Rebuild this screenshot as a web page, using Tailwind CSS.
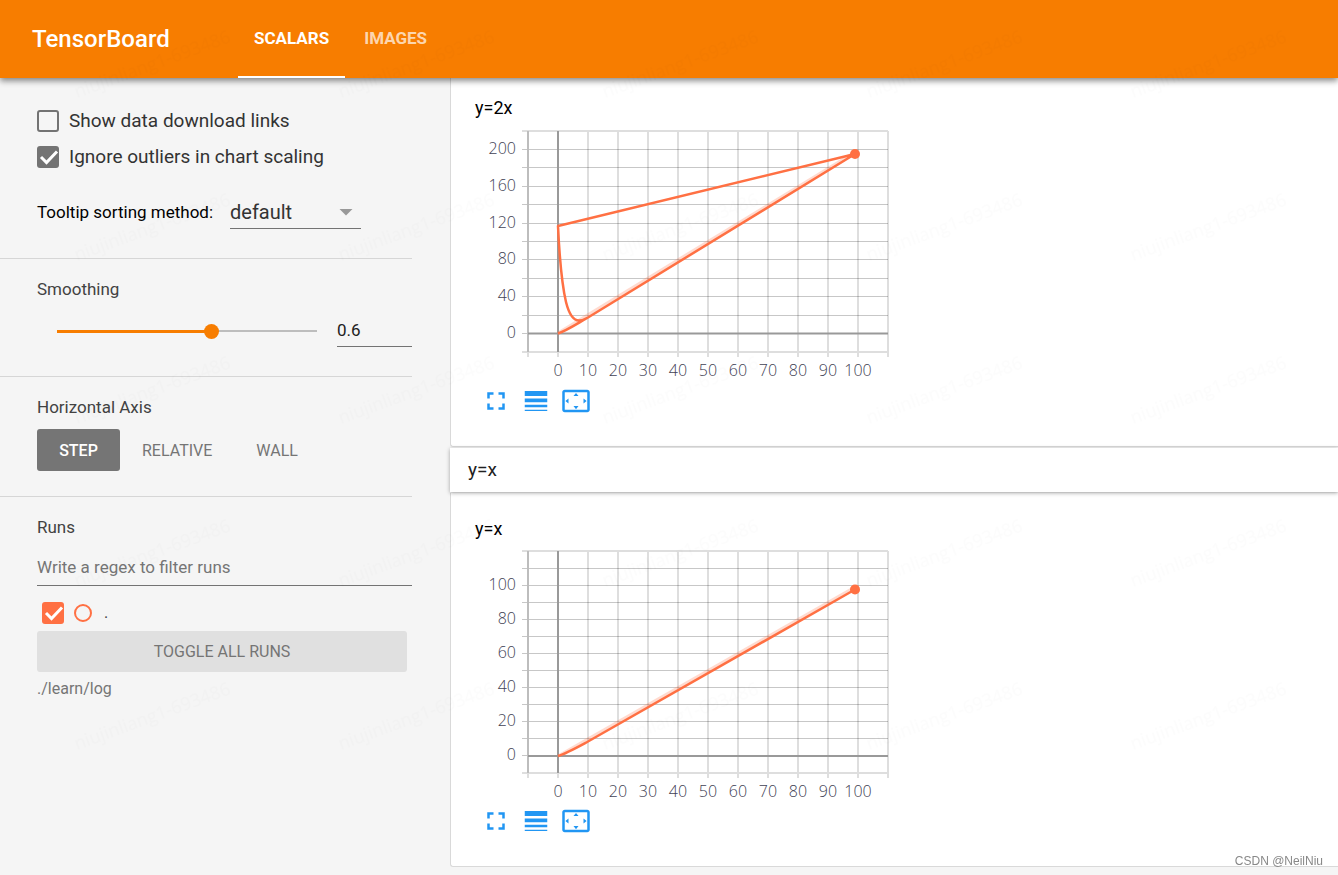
<!DOCTYPE html>
<html lang="en">
<head>
<meta charset="utf-8">
<title>TensorBoard</title>
<script src="https://cdn.jsdelivr.net/npm/@tailwindcss/browser@4"></script>
</head>
<body class="flex min-h-screen flex-col bg-[#f5f5f5] font-[Roboto,sans-serif] text-[#212121]">

<!-- Icons shared by both chart toolbars -->
<svg class="hidden" aria-hidden="true">
  <symbol id="fullscreen" viewBox="0 0 24 24"><path d="M7 14H5v5h5v-2H7v-3zm-2-4h2V7h3V5H5v5zm12 7h-3v2h5v-5h-2v3zM14 5v2h3v3h2V5h-5z"/></symbol>
  <symbol id="line-weight" viewBox="0 0 24 24"><path d="M3 17h18v-2H3v2zm0 3h18v-1H3v1zm0-7h18v-3H3v3zm0-9v4h18V4H3z"/></symbol>
  <symbol id="overscan" viewBox="0 0 24 24"><path d="M12.01 5.5L10 8h4l-1.99-2.5zM18 10v4l2.5-1.99L18 10zM6 10l-2.5 2.01L6 14v-4zm8 6h-4l2.01 2.5L14 16zm7-13H3c-1.1 0-2 .9-2 2v14c0 1.1.9 2 2 2h18c1.1 0 2-.9 2-2V5c0-1.1-.9-2-2-2zm0 16.01H3V4.99h18v14.02z"/></symbol>
</svg>

<header class="z-10 flex h-[78px] shrink-0 items-stretch bg-[#f77d00] pl-8 shadow-[0_3px_6px_rgba(0,0,0,0.45)]">
  <h1 class="flex w-[206px] items-center text-2xl font-medium text-white">TensorBoard</h1>
  <nav class="flex gap-[3px] text-[17px] font-bold">
    <a href="#scalars" aria-current="page" class="flex items-center border-b-2 border-white px-4 pt-0.5 text-white">SCALARS</a>
    <a href="#images" class="flex items-center border-b-2 border-transparent px-4 pt-0.5 text-white/70">IMAGES</a>
  </nav>
</header>

<div class="flex flex-1">
  <aside class="w-[450px] shrink-0 pr-[38px]">
    <section class="border-b border-[#d6d6d6] pt-[25px] pb-[29px] pl-[37px]">
      <label class="flex h-9 items-center gap-2.5 text-[19px] text-[#333]">
        <input type="checkbox" class="size-[22px] appearance-none rounded-[3px] border-2 border-[#737373]">
        Show data download links
      </label>
      <label class="flex h-9 items-center gap-2.5 text-[19px] text-[#333]">
        <span class="relative size-[22px]">
          <input type="checkbox" checked class="block size-[22px] appearance-none rounded-[3px] bg-[#737373]">
          <svg class="pointer-events-none absolute inset-0" viewBox="0 0 22 22" fill="none" stroke="#fff" stroke-width="3"><path d="M4 11l5.500 5.500L20 5.500"/></svg>
        </span>
        Ignore outliers in chart scaling
      </label>
      <div class="mt-[21px] flex h-[33px] items-stretch gap-3">
        <label for="sort" class="flex w-[181px] items-center text-[17px] whitespace-nowrap text-black">Tooltip sorting method:</label>
        <div class="relative w-[131px]">
          <select id="sort" class="size-full appearance-none border-b border-[#737373] text-xl text-[#333]">
            <option>default</option><option>descending</option><option>ascending</option><option>nearest</option>
          </select>
          <svg class="pointer-events-none absolute top-[13px] right-2" width="14" height="7" viewBox="0 0 14 7" fill="#999"><path d="M0.500 0h13L7 6.500z"/></svg>
        </div>
      </div>
    </section>

    <section class="border-b border-[#d6d6d6] pt-[18px] pb-[29px] pl-[37px]">
      <h3 class="text-[17px]/6 text-[#424242]"><label for="smooth">Smoothing</label></h3>
      <div class="mt-3.5 flex h-8 items-center gap-5 pl-5">
        <input id="smooth" type="range" min="0" max="1" step="0.1" value="0.6" class="h-4 min-w-0 flex-1 appearance-none bg-transparent [&::-webkit-slider-runnable-track]:h-[3px] [&::-webkit-slider-runnable-track]:[background:linear-gradient(#f77d00,#f77d00)_0_0/60%_3px_no-repeat,linear-gradient(#bdbdbd,#bdbdbd)_0_0/100%_2px_no-repeat] [&::-webkit-slider-thumb]:-mt-1.5 [&::-webkit-slider-thumb]:size-[15px] [&::-webkit-slider-thumb]:appearance-none [&::-webkit-slider-thumb]:rounded-full [&::-webkit-slider-thumb]:bg-[#f77d00]">
        <input type="text" aria-label="Smoothing value" value="0.6" class="h-8 w-[75px] border-b border-[#737373] pb-0.5 text-[17px]">
      </div>
    </section>

    <section class="border-b border-[#d6d6d6] pt-[18px] pb-[25px] pl-[37px]">
      <h3 class="text-[17px]/6 text-[#424242]">Horizontal Axis</h3>
      <div class="mt-2.5 flex h-[42px] text-base text-[#757575]">
        <button class="w-[83px] rounded-[3px] bg-[#757575] pt-0.5 font-medium text-white">STEP</button>
        <button class="px-[22px] pt-0.5">RELATIVE</button>
        <button class="px-[22px] pt-0.5">WALL</button>
      </div>
    </section>

    <section class="pt-[18px] pl-[37px]">
      <h3 class="text-[17px]/6 text-[#424242]">Runs</h3>
      <input type="text" aria-label="Filter runs" placeholder="Write a regex to filter runs" class="mt-3 block h-[35px] w-full border-b border-[#737373] pb-0.5 text-[17px] placeholder:text-[#757575]">
      <label class="mt-[9px] flex h-9 items-center gap-2.5 pl-[5px] text-[#424242]">
        <span class="relative size-[22px]">
          <input type="checkbox" checked class="block size-[22px] appearance-none rounded-[3px] bg-[#ff7043]">
          <svg class="pointer-events-none absolute inset-0" viewBox="0 0 22 22" fill="none" stroke="#fff" stroke-width="3"><path d="M4 11l5.500 5.500L20 5.500"/></svg>
        </span>
        <span class="size-[18px] rounded-full border-2 border-[#ff7043]"></span>
        <span class="pl-0.5">.</span>
      </label>
      <button class="block h-[41px] w-[370px] rounded-[3px] bg-[#e0e0e0] text-base text-[#757575]">TOGGLE ALL RUNS</button>
      <p class="mt-[5px] text-base/6 text-[#757575]">./learn/log</p>
    </section>
  </aside>

  <main id="scalars" class="min-w-0 flex-1">
    <article class="rounded-bl-[3px] border-b border-l border-[#d9d9d9] bg-white pt-[18px] pb-6 pl-6">
      <h2 class="text-lg/6 text-black">y=2x</h2>
      <svg class="mt-[5px]" width="425" height="256" viewBox="475 125 425 256" role="img" aria-label="y=2x">
        <g fill="none">
          <path stroke="#000" stroke-opacity=".13" stroke-width="2" d="M588 131V357M618 131V357M648 131V357M678 131V357M708 131V357M738 131V357M768 131V357M798 131V357M828 131V357M858 131V357M888 131V357M528 352V357M558 352V357M522 131H888M522 352H888"/>
          <path stroke="#000" stroke-opacity=".22" d="M522 149.500H888M522 167.500H888M522 186.500H888M522 204.500H888M522 223.500H888M522 241.500H888M522 259.500H888M522 278.500H888M522 296.500H888M522 315.500H888M522 333.500H528"/>
          <path stroke="#bdbdbd" stroke-width="2" d="M528 131V352"/>
          <path stroke="#999" stroke-width="2" d="M558 131V352M528 333.500H888"/>
          <path stroke="#ff7043" stroke-opacity=".25" stroke-width="3" d="M558 333L855 152"/>
          <path stroke="#ff7043" stroke-width="2.500" stroke-linejoin="round" d="M558 333.500C566 331 575 325 588 317.500L855 154L558 226C559.500 258 562 285 566 302C569 314 573 320.500 579 320.500C583 320.500 588 317.500 588 317.500"/>
          <circle cx="855" cy="154" r="5" fill="#ff7043"/>
          <g fill="#424254" class="font-['Open_Sans',sans-serif] text-base font-light" text-anchor="end">
            <text x="516" y="154">200</text><text x="516" y="191">160</text><text x="516" y="228">120</text><text x="516" y="264">80</text><text x="516" y="301">40</text><text x="516" y="338">0</text>
          </g>
          <g fill="#424254" class="font-['Open_Sans',sans-serif] text-base font-light" text-anchor="middle">
            <text x="558" y="376">0</text><text x="588" y="376">10</text><text x="618" y="376">20</text><text x="648" y="376">30</text><text x="678" y="376">40</text><text x="708" y="376">50</text><text x="738" y="376">60</text><text x="768" y="376">70</text><text x="798" y="376">80</text><text x="828" y="376">90</text><text x="858" y="376">100</text>
          </g>
        </g>
      </svg>
      <div class="flex pb-px pl-px text-[#2196f3]">
        <button aria-label="Toggle full size" class="p-[5px]"><svg class="size-[30px] fill-current"><use href="#fullscreen"/></svg></button>
        <button aria-label="Toggle log scale" class="p-[5px]"><svg class="size-[30px] fill-current"><use href="#line-weight"/></svg></button>
        <button aria-label="Fit domain to data" class="p-[5px]"><svg class="size-[30px] fill-current"><use href="#overscan"/></svg></button>
      </div>
    </article>

    <h2 class="relative mt-px flex h-11 items-center bg-white pl-[18px] text-[19px] shadow-[0_1px_4px_rgba(0,0,0,0.35)]">y=x</h2>

    <article class="mt-px rounded-bl-[3px] border-b border-l border-[#d9d9d9] bg-white pt-6 pb-6 pl-6">
      <h2 class="text-lg/6 text-black">y=x</h2>
      <svg class="mt-[5px]" width="425" height="255" viewBox="475 546 425 255" role="img" aria-label="y=x">
        <g fill="none">
          <path stroke="#000" stroke-opacity=".13" stroke-width="2" d="M588 551V778M618 551V778M648 551V778M678 551V778M708 551V778M738 551V778M768 551V778M798 551V778M828 551V778M858 551V778M888 551V778M528 773V778M558 773V778M522 551H888M522 773H888"/>
          <path stroke="#000" stroke-opacity=".22" d="M522 568.500H888M522 585.500H888M522 602.500H888M522 619.500H888M522 636.500H888M522 653.500H888M522 670.500H888M522 687.500H888M522 704.500H888M522 721.500H888M522 738.500H888M522 755.500H528"/>
          <path stroke="#bdbdbd" stroke-width="2" d="M528 551V773"/>
          <path stroke="#999" stroke-width="2" d="M558 551V773M528 756H888"/>
          <path stroke="#ff7043" stroke-opacity=".25" stroke-width="3" d="M558 756L855 587"/>
          <path stroke="#ff7043" stroke-width="2.500" stroke-linejoin="round" d="M558 756C566 753.500 575 748.500 588 741.500L855 589.500"/>
          <circle cx="855" cy="589.500" r="5" fill="#ff7043"/>
          <g fill="#424254" class="font-['Open_Sans',sans-serif] text-base font-light" text-anchor="end">
            <text x="516" y="590">100</text><text x="516" y="624">80</text><text x="516" y="658">60</text><text x="516" y="692">40</text><text x="516" y="726">20</text><text x="516" y="760">0</text>
          </g>
          <g fill="#424254" class="font-['Open_Sans',sans-serif] text-base font-light" text-anchor="middle">
            <text x="558" y="797">0</text><text x="588" y="797">10</text><text x="618" y="797">20</text><text x="648" y="797">30</text><text x="678" y="797">40</text><text x="708" y="797">50</text><text x="738" y="797">60</text><text x="768" y="797">70</text><text x="798" y="797">80</text><text x="828" y="797">90</text><text x="858" y="797">100</text>
          </g>
        </g>
      </svg>
      <div class="flex pb-px pl-px text-[#2196f3]">
        <button aria-label="Toggle full size" class="p-[5px]"><svg class="size-[30px] fill-current"><use href="#fullscreen"/></svg></button>
        <button aria-label="Toggle log scale" class="p-[5px]"><svg class="size-[30px] fill-current"><use href="#line-weight"/></svg></button>
        <button aria-label="Fit domain to data" class="p-[5px]"><svg class="size-[30px] fill-current"><use href="#overscan"/></svg></button>
      </div>
    </article>
  </main>
</div>

<!-- Repeating user-id watermark over the whole window -->
<svg class="pointer-events-none fixed inset-0 z-20 size-full" aria-hidden="true">
  <defs>
    <pattern id="mark" width="264" height="163" patternUnits="userSpaceOnUse">
      <text transform="translate(77 98) rotate(-20)" class="font-['Open_Sans',sans-serif] text-lg" fill="#000" fill-opacity=".012">niujinliang1-693486</text>
    </pattern>
  </defs>
  <rect width="100%" height="768" fill="url(#mark)"/>
</svg>
<p class="fixed right-[15px] bottom-1.5 z-20 font-['Liberation_Sans',sans-serif] text-xs/4 text-[#888]">CSDN @NeilNiu</p>
</body>
</html>
